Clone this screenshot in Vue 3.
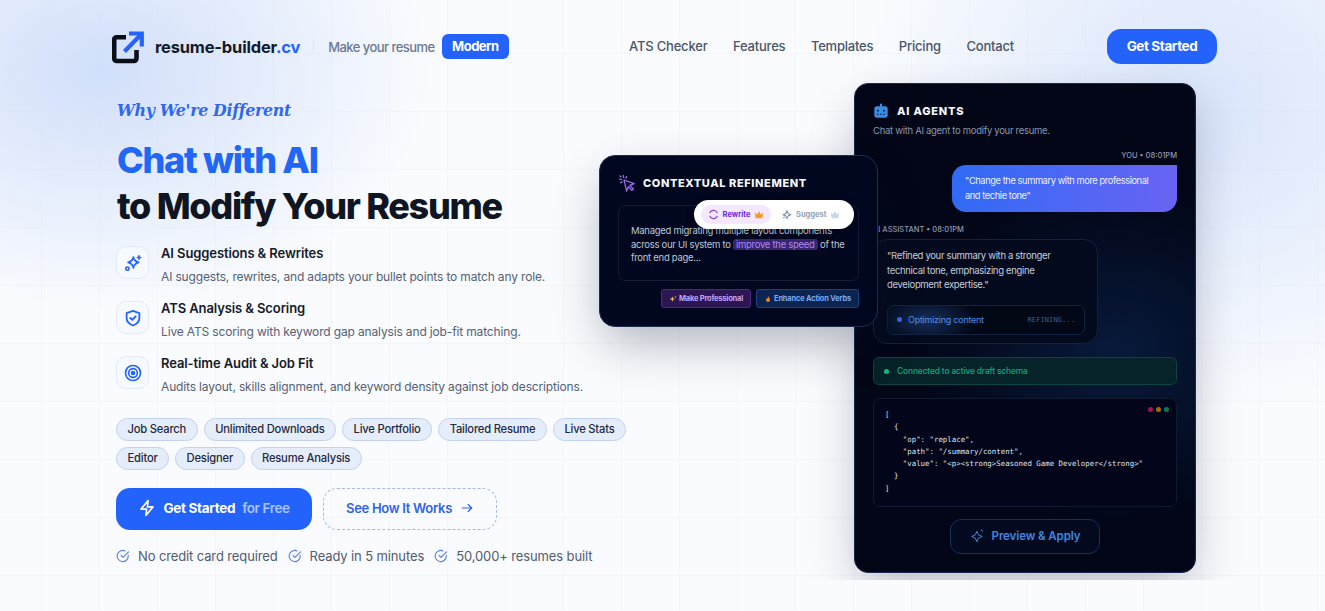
<template>
  <div class="page">
    <header class="nav">
      <div class="brand">
        <svg class="logo" viewBox="0 0 34 34" fill="none">
          <path d="M14 7.200H4.700a2.500 2.500 0 0 0-2.500 2.500v18.800a2.500 2.500 0 0 0 2.500 2.500h17.300a2.500 2.500 0 0 0 2.500-2.500V20" stroke="#0b0f1a" stroke-width="4.600"/>
          <path d="M12.500 21.500 29 4.500M17 3.500h12.800v13" stroke="#2563ff" stroke-width="4.200"/>
        </svg>
        <span class="brand-name">resume-builder<em>.cv</em></span>
        <span class="divider"></span>
        <span class="make">Make your resume</span>
        <span class="badge">Modern</span>
      </div>
      <nav class="links">
        <a v-for="l in links" :key="l">{{ l }}</a>
      </nav>
      <button class="nav-cta">Get Started</button>
    </header>

    <main class="hero">
      <section class="left">
        <p class="eyebrow">Why We're Different</p>
        <h1><span>Chat with AI</span><br>to Modify Your Resume</h1>

        <ul class="features">
          <li v-for="f in features" :key="f.title">
            <div class="f-icon">
              <svg v-if="f.icon==='spark'" viewBox="0 0 24 24" fill="none" stroke="#2563ff" stroke-width="2.200" stroke-linejoin="round" stroke-linecap="round">
                <path d="M12.500 4c.7 4 2.800 6.200 7 7.200-4.200 1-6.300 3.200-7 7.300-.7-4.100-2.800-6.300-7-7.300 4.200-1 6.300-3.200 7-7.200z"/>
                <path d="M20 2.500v4.500M17.800 4.700h4.400"/>
                <circle cx="4.500" cy="19.500" r="2.200"/>
              </svg>
              <svg v-else-if="f.icon==='shield'" viewBox="0 0 24 24" fill="none" stroke="#2563ff" stroke-width="2.400" stroke-linejoin="round" stroke-linecap="round">
                <path d="M12 2.500l8.500 3v6.500c0 5-3.500 8-8.500 10-5-2-8.500-5-8.500-10V5.500z"/>
                <path d="M8.500 12l2.500 2.500 4.500-4.500"/>
              </svg>
              <svg v-else viewBox="0 0 24 24" fill="none" stroke="#2563ff" stroke-width="2.200">
                <circle cx="12" cy="12" r="10"/>
                <circle cx="12" cy="12" r="5.800"/>
                <circle cx="12" cy="12" r="2" fill="#2563ff"/>
              </svg>
            </div>
            <div>
              <h3>{{ f.title }}</h3>
              <p>{{ f.text }}</p>
            </div>
          </li>
        </ul>

        <div class="tags">
          <span v-for="t in tags" :key="t">{{ t }}</span>
        </div>

        <div class="actions">
          <button class="primary">
            <svg viewBox="0 0 24 24" fill="none" stroke="#fff" stroke-width="2.200" stroke-linejoin="round"><path d="M13.500 2 4 13.500h7.500L10.500 22 20 10.500h-7.500z"/></svg>
            <b>Get Started</b><i>for Free</i>
          </button>
          <button class="ghost">
            See How It Works
            <svg viewBox="0 0 24 24" fill="none" stroke="#2f63e6" stroke-width="2" stroke-linecap="round" stroke-linejoin="round"><path d="M4 12h16M14 6l6 6-6 6"/></svg>
          </button>
        </div>

        <div class="checks">
          <span v-for="c in checks" :key="c">
            <svg viewBox="0 0 24 24" fill="none" stroke="#5b83e6" stroke-width="2" stroke-linecap="round" stroke-linejoin="round"><path d="M21 11v1a9.500 9.500 0 1 1-5.500-8.600"/><path d="M8.500 11l3.500 3.500L21.500 5"/></svg>
            {{ c }}
          </span>
        </div>
      </section>

      <section class="right">
        <div class="refine">
          <div class="refine-head">
            <svg viewBox="0 0 24 24" fill="none" stroke="#a06be8" stroke-width="1.700" stroke-linejoin="round" stroke-linecap="round">
              <path d="M8 8l13.500 4.800-5.800 2.300 4.800 4.800-1.900 1.900-4.800-4.800-2.300 5.800z"/>
              <path d="M7 2l.6 2.500M2 7l2.500.6M2.500 2.500l1.500 1.500M11.500 3.500l-1 2M3.500 11.500l2-1"/>
            </svg>
            <span>CONTEXTUAL REFINEMENT</span>
          </div>
          <div class="refine-box">
            Managed migrating multiple layout components across our UI system to <mark>improve the speed</mark> of the front end page...
          </div>
          <div class="toolbar">
            <span class="tb-on">
              <svg viewBox="0 0 24 24" fill="none" stroke="#8b3fe0" stroke-width="2.600" stroke-linecap="round"><path d="M20 8a9 9 0 0 0-14-2.500L4 8M4 16a9 9 0 0 0 14 2.500L20 16"/></svg>
              Rewrite
              <svg class="crown" viewBox="0 0 24 24" fill="#f0a020"><path d="M2 6l5.500 5L12 3l4.500 8L22 6l-2 14H4z"/></svg>
            </span>
            <span class="tb-off">
              <svg viewBox="0 0 24 24" fill="none" stroke="#7f93ad" stroke-width="2.400" stroke-linejoin="round"><path d="M13 4l2.500 6 6 2.500-6 2.500L13 21l-2.500-6-6-2.500 6-2.500z"/><path d="M5 20l3-3"/></svg>
              Suggest
              <svg class="crown" viewBox="0 0 24 24" fill="#c9d6ea"><path d="M2 6l5.500 5L12 3l4.500 8L22 6l-2 14H4z"/></svg>
            </span>
          </div>
          <div class="chips">
            <span class="chip-purple">
              <svg viewBox="0 0 24 24" fill="#f5c542"><path d="M10 4l2 6 6 2-6 2-2 6-2-6-6-2 6-2zM19 2l1 3 3 1-3 1-1 3-1-3-3-1 3-1z"/></svg>
              Make Professional
            </span>
            <span class="chip-blue">
              <svg viewBox="0 0 24 24" fill="#f2802b"><path d="M12 2c1 4 6 7 6 13a6 6 0 0 1-12 0c0-3 1.500-4.500 3-6 .2 1.500 1 2.500 2 3 .5-3.500.2-7 1-10z"/></svg>
              Enhance Action Verbs
            </span>
          </div>
        </div>

        <div class="agent">
          <div class="agent-head">
            <svg viewBox="0 0 24 24"><rect x="2" y="5" width="20" height="17" rx="4" fill="#3d8ae0"/><rect x="10.500" y="1" width="3" height="5" fill="#3d8ae0"/><g fill="#123a78"><rect x="6" y="10" width="3" height="3"/><rect x="15" y="10" width="3" height="3"/><rect x="6" y="16" width="2.500" height="2"/><rect x="10.700" y="16" width="2.500" height="2"/><rect x="15.500" y="16" width="2.500" height="2"/></g></svg>
            <span>AI AGENTS</span>
          </div>
          <p class="agent-sub">Chat with AI agent to modify your resume.</p>

          <div class="meta you">YOU • 08:01PM</div>
          <div class="bubble-you">"Change the summary with more professional and techie tone"</div>

          <div class="meta bot">AI ASSISTANT • 08:01PM</div>
          <div class="bubble-bot">
            <p>"Refined your summary with a stronger technical tone, emphasizing engine development expertise."</p>
            <div class="status">
              <i></i><span>Optimizing content</span><code>REFINING...</code>
            </div>
          </div>

          <div class="connected"><i></i>Connected to active draft schema</div>

          <div class="code">
            <div class="dots"><i></i><i></i><i></i></div>
            <pre>{{ json }}</pre>
          </div>

          <button class="apply">
            <svg viewBox="0 0 24 24" fill="none" stroke="#3f86e0" stroke-width="1.600" stroke-linejoin="round"><path d="M11 5l2.500 6 6 2.500-6 2.500-2.500 6-2.500-6-6-2.500 6-2.500z"/><path d="M18 2.500l.8 2 2 .8"/></svg>
            Preview &amp; Apply
          </button>
        </div>
      </section>
    </main>
  </div>
</template>

<script setup>
const links = ['ATS Checker', 'Features', 'Templates', 'Pricing', 'Contact']

const features = [
  { icon: 'spark', title: 'AI Suggestions & Rewrites', text: 'AI suggests, rewrites, and adapts your bullet points to match any role.' },
  { icon: 'shield', title: 'ATS Analysis & Scoring', text: 'Live ATS scoring with keyword gap analysis and job-fit matching.' },
  { icon: 'target', title: 'Real-time Audit & Job Fit', text: 'Audits layout, skills alignment, and keyword density against job descriptions.' }
]

const tags = ['Job Search', 'Unlimited Downloads', 'Live Portfolio', 'Tailored Resume', 'Live Stats', 'Editor', 'Designer', 'Resume Analysis']

const checks = ['No credit card required', 'Ready in 5 minutes', '50,000+ resumes built']

const json = `[
  {
    "op": "replace",
    "path": "/summary/content",
    "value": "<p><strong>Seasoned Game Developer</strong>"
  }
]`
</script>

<style>
html, body { margin: 0; background: #f9fbfe; }
</style>

<style scoped>
.page {
  width: 1325px;
  height: 611px;
  overflow: hidden;
  box-sizing: border-box;
  font-family: Inter, "Noto Sans", sans-serif;
  color: #0f172a;
  background:
    radial-gradient(330px 240px at 100px 70px, rgba(205,220,250,.9), transparent 100%),
    radial-gradient(340px 300px at 1200px 110px, rgba(205,220,250,.72), transparent 100%),
    linear-gradient(rgba(148,170,210,.06) 1px, transparent 1px),
    linear-gradient(90deg, rgba(148,170,210,.06) 1px, transparent 1px),
    #f9fbfe;
  background-size: auto, auto, 58px 58px, 58px 58px, auto;
  background-position: 0 0, 0 0, 0 53px, 41px 0, 0 0;
}

.nav {
  display: flex;
  align-items: center;
  height: 35px;
  padding: 29px 108px 0 112px;
}
.brand { display: flex; align-items: center; }
.logo { width: 34px; height: 34px; margin-right: 9px; }
.brand-name { font-size: 16.500px; font-weight: 700; letter-spacing: -.2px; color: #141a29; }
.brand-name em { font-style: normal; color: #2563ff; }
.divider { width: 1px; height: 16px; background: #e2e8f0; margin: 0 14px 0 13px; }
.make { font-size: 13px; font-weight: 500; color: #6b7890; letter-spacing: -.55px; }
.badge {
  margin-left: 7px;
  padding: 0 10.500px;
  height: 25px;
  line-height: 25px;
  border-radius: 6px;
  background: #2463fb;
  color: #fff;
  font-size: 13px;
  font-weight: 700;
  letter-spacing: -.5px;
}
.links { display: flex; gap: 25.500px; margin: -2px 0 0 120px; }
.links a { font-size: 13px; font-weight: 500; color: #4a5568; letter-spacing: -.2px; }
.nav-cta {
  margin-left: auto;
  width: 110px;
  height: 35px;
  padding-bottom: 2px;
  border: 0;
  border-radius: 14px;
  background: #2463fb;
  color: #fff;
  font: 700 13.500px Inter, sans-serif;
  letter-spacing: -.4px;
}

/* shadows stop at the section's bottom edge */
.hero { display: flex; justify-content: space-between; height: 516px; overflow: hidden; padding: 0 129px 0 116px; }
.left { width: 520px; padding-top: 37px; }
.eyebrow {
  margin: 0 0 0 1px;
  font: italic 700 15.800px/20px "DejaVu Serif", serif;
  letter-spacing: -.3px;
  color: #2f67ef;
}
h1 {
  margin: 17px 0 0 1px;
  font-size: 36px;
  line-height: 45.500px;
  font-weight: 800;
  letter-spacing: -1.300px;
  color: #101522;
}
h1 span { color: #2066f7; }

.features { list-style: none; margin: 15px 0 0; padding: 0; }
.features li { display: flex; gap: 12px; height: 55px; }
.f-icon {
  box-sizing: border-box;
  width: 33px;
  height: 33px;
  margin-top: 2px;
  display: flex;
  align-items: center;
  justify-content: center;
  border: 1px solid #e3eaf6;
  border-radius: 10px;
  background: #f6f9fe;
  flex-shrink: 0;
}
.f-icon svg { width: 18px; height: 18px; }
.features h3 { margin: 0; font-size: 13px; line-height: 18px; font-weight: 600; color: #141a29; letter-spacing: -.1px; }
.features p { margin: 6px 0 0; font-size: 12px; line-height: 17px; color: #566175; letter-spacing: -.15px; white-space: nowrap; }

.tags { display: flex; flex-wrap: wrap; gap: 6px; width: 520px; margin-top: 9px; }
.tags span {
  box-sizing: border-box;
  height: 23px;
  line-height: 21px;
  padding: 0 10.500px;
  border: 1px solid #c3d2ee;
  border-radius: 12px;
  background: #e5edfa;
  font-size: 11.200px;
  font-weight: 500;
  color: #1f2a3d;
  letter-spacing: -.2px;
}

.actions { display: flex; gap: 11px; margin-top: 18px; }
.primary {
  display: flex;
  align-items: center;
  justify-content: center;
  width: 196px;
  height: 42px;
  padding: 0 0 2px;
  border: 0;
  border-radius: 14px;
  background: #2463fb;
  color: #fff;
  font: 13.500px Inter, sans-serif;
}
.primary svg { width: 18px; height: 18px; margin-right: 7px; }
.primary b { font-weight: 700; letter-spacing: -.3px; }
.primary i { font-style: normal; font-weight: 600; color: #a9c3fd; margin-left: 7px; letter-spacing: -.4px; }
.ghost {
  display: flex;
  align-items: center;
  justify-content: center;
  gap: 8px;
  width: 174px;
  height: 42px;
  padding: 0 0 2px;
  border: 1px dashed #a4b9e4;
  border-radius: 14px;
  background: transparent;
  color: #2f63e6;
  font: 600 13px Inter, sans-serif;
  letter-spacing: -.3px;
}
.ghost svg { width: 14px; height: 14px; }

.checks { display: flex; gap: 10px; margin-top: 18px; }
.checks span { display: flex; align-items: center; gap: 8px; font-size: 13px; color: #515c70; letter-spacing: -.12px; white-space: nowrap; }
.checks svg { width: 14px; height: 14px; }

.right { position: relative; }
.agent {
  box-sizing: border-box;
  width: 342px;
  height: 490px;
  margin-top: 19px;
  padding: 19px 18px 0;
  border: 1px solid #1a2a4c;
  border-radius: 14px;
  background:
    radial-gradient(200px 170px at 260px 270px, rgba(13,45,95,.5), transparent 100%),
    #020617;
  box-shadow: 0 20px 50px -6px rgba(15,23,42,.28);
  color: #cbd5e1;
}
.agent-head { display: flex; align-items: center; gap: 8px; }
.agent-head svg { width: 16px; height: 16px; }
.agent-head span { font-size: 11px; font-weight: 800; letter-spacing: .8px; color: #f4f7fb; }
.agent-sub { margin: 5px 0 0; font-size: 9.500px; line-height: 13px; color: #8a96a9; letter-spacing: -.3px; }
.meta { font-size: 7.500px; font-weight: 500; line-height: 10px; color: #8f9bad; }
.you { margin-top: 14px; text-align: right; }
.bubble-you {
  box-sizing: border-box;
  width: 225px;
  height: 47px;
  margin: 4px 0 0 auto;
  padding: 8px 13px;
  border-radius: 14px 0 14px 14px;
  background: linear-gradient(100deg, #2f6bf5, #6a63f3);
  color: #eaf0ff;
  font-size: 9.300px;
  line-height: 15px;
  letter-spacing: -.42px;
}
.bot { margin-top: 13px; }
.bubble-bot {
  box-sizing: border-box;
  width: 225px;
  height: 105px;
  margin-top: 4px;
  padding: 9px 12px 0 13px;
  border: 1px solid #14213b;
  border-radius: 14px;
  background: #040a1e;
}
.bubble-bot p { margin: 0; font-size: 9.500px; line-height: 14.500px; color: #c6cfdb; letter-spacing: -.33px; }
.status {
  box-sizing: border-box;
  display: flex;
  align-items: center;
  height: 30px;
  margin-top: 12px;
  padding: 0 9px;
  border: 1px solid #13233f;
  border-radius: 7px;
  background: radial-gradient(50px 26px at 38px 14px, rgba(40,85,160,.5), transparent 100%), #030817;
}
.status i { width: 5px; height: 5px; border-radius: 50%; background: #3b63e6; margin-right: 6px; }
.status span { font-size: 9px; color: #4d8ee0; letter-spacing: -.25px; }
.status code { margin-left: auto; font: 7px "DejaVu Sans Mono", monospace; color: #3c5c8f; letter-spacing: .1px; }
.connected {
  box-sizing: border-box;
  display: flex;
  align-items: center;
  height: 28px;
  margin-top: 13px;
  padding: 0 10px;
  border: 1px solid #0e4344;
  border-radius: 6px;
  background: #052329;
  font-size: 8.500px;
  font-weight: 500;
  color: #12a77c;
  letter-spacing: -.2px;
}
.connected i { width: 5px; height: 5px; border-radius: 50%; background: #10b981; margin-right: 8px; }
.code {
  position: relative;
  box-sizing: border-box;
  height: 109px;
  margin-top: 13px;
  padding: 10px 11px;
  border: 1px solid #10192e;
  border-radius: 7px;
  background: #03061a;
}
.dots { position: absolute; top: 8px; right: 7px; display: flex; gap: 3px; }
.dots i { width: 5px; height: 5px; border-radius: 50%; }
.dots i:nth-child(1) { background: #a3144f; }
.dots i:nth-child(2) { background: #a86a10; }
.dots i:nth-child(3) { background: #0b7a58; }
pre { margin: 0; font: 7.400px/12.300px "DejaVu Sans Mono", monospace; color: #dfe4ec; }
.apply {
  display: flex;
  align-items: center;
  justify-content: center;
  gap: 7px;
  width: 150px;
  height: 35px;
  margin: 12px auto 0;
  padding: 0 0 2px;
  border: 1.500px solid #13305f;
  border-radius: 11px;
  background: #030a20;
  color: #3f86e0;
  font: 600 11.500px Inter, sans-serif;
  letter-spacing: -.1px;
}
.apply svg { width: 15px; height: 15px; }

/* floating card sits on top of the agent panel */
.refine {
  position: absolute;
  z-index: 2;
  left: -255px;
  top: 91px;
  box-sizing: border-box;
  width: 279px;
  height: 172px;
  padding: 18px 18px;
  border: 1px solid #1e2c4e;
  border-radius: 16px;
  background: #020720;
  box-shadow: 0 20px 50px -6px rgba(15,23,42,.32);
}
.refine-head { display: flex; align-items: center; gap: 7px; }
.refine-head svg { width: 18px; height: 18px; }
.refine-head span { font-size: 11px; font-weight: 800; letter-spacing: .6px; color: #f4f7fb; }
.refine-box {
  box-sizing: border-box;
  height: 76px;
  margin-top: 13px;
  padding: 18px 12px 0;
  border: 1px solid #111b33;
  border-radius: 7px;
  font-size: 9.500px;
  line-height: 13.500px;
  color: #bcc6d4;
  letter-spacing: -.28px;
}
mark { background: #3a2470; color: #a58ae8; border-radius: 3px; padding: 0 3px; }
.toolbar {
  position: absolute;
  left: 94px;
  top: 44px;
  box-sizing: border-box;
  display: flex;
  align-items: center;
  width: 160px;
  height: 29px;
  padding: 0 7px;
  border-radius: 15px;
  background: #fff;
  box-shadow: 0 2px 8px rgba(0,0,0,.2);
}
.toolbar span { display: flex; align-items: center; gap: 4px; font-size: 7.500px; font-weight: 700; }
.toolbar svg { width: 11px; height: 11px; }
.toolbar .crown { width: 10px; height: 10px; }
.tb-on { width: 70px; height: 19px; justify-content: center; border-radius: 10px; background: #f3e8ff; color: #6d28d9; }
.tb-off { margin-left: 10px; color: #94a3b8; }
.chips { display: flex; justify-content: flex-end; gap: 5px; margin-top: 8px; }
.chips span {
  box-sizing: border-box;
  display: flex;
  align-items: center;
  gap: 2px;
  height: 19px;
  padding: 0 7px;
  border-radius: 3px;
  font-size: 7.500px;
  font-weight: 700;
  letter-spacing: -.2px;
}
.chips svg { width: 8px; height: 8px; }
.chip-purple { background: #2c1654; border: 1px solid #4a2a80; color: #c4a5f5; }
.chip-blue { background: #0c2450; border: 1px solid #1c4080; color: #79aaf0; }
</style>
